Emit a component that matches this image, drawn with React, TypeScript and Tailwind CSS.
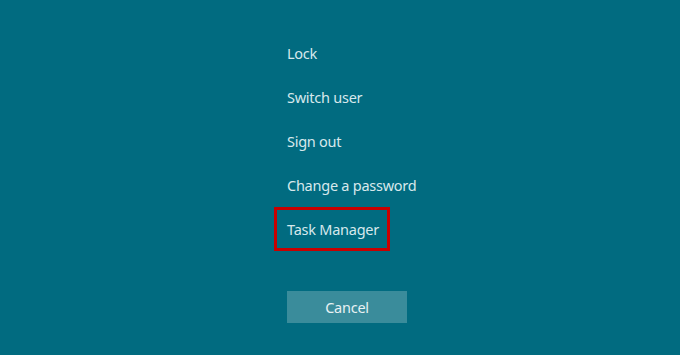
import React from "react";

const options = ["Lock", "Switch user", "Sign out", "Change a password", "Task Manager"];

const App = () => {
  return (
    <div
      className="w-[680px] h-[355px] bg-[#016b80] overflow-hidden text-[#d7e8ec]"
      style={{ fontFamily: '"Noto Sans", "Open Sans", sans-serif' }}
    >
      <div className="flex flex-col items-start pt-[31px] pl-[274px]">
        {options.map((label) => (
          <div
            key={label}
            className={
              "h-[44px] flex items-center pt-[2px] pl-[10px] pr-[8px] border-[3px] text-[14.5px] tracking-[-0.25px] " +
              (label === "Task Manager" ? "border-[#c80000]" : "border-transparent")
            }
          >
            {label}
          </div>
        ))}
        <button className="mt-[40px] ml-[13px] w-[120px] h-[32px] pt-[2px] bg-[#3a8c9b] text-[14.5px] tracking-[-0.25px] text-[#e8f1f3]">
          Cancel
        </button>
      </div>
    </div>
  );
};

export default App;
